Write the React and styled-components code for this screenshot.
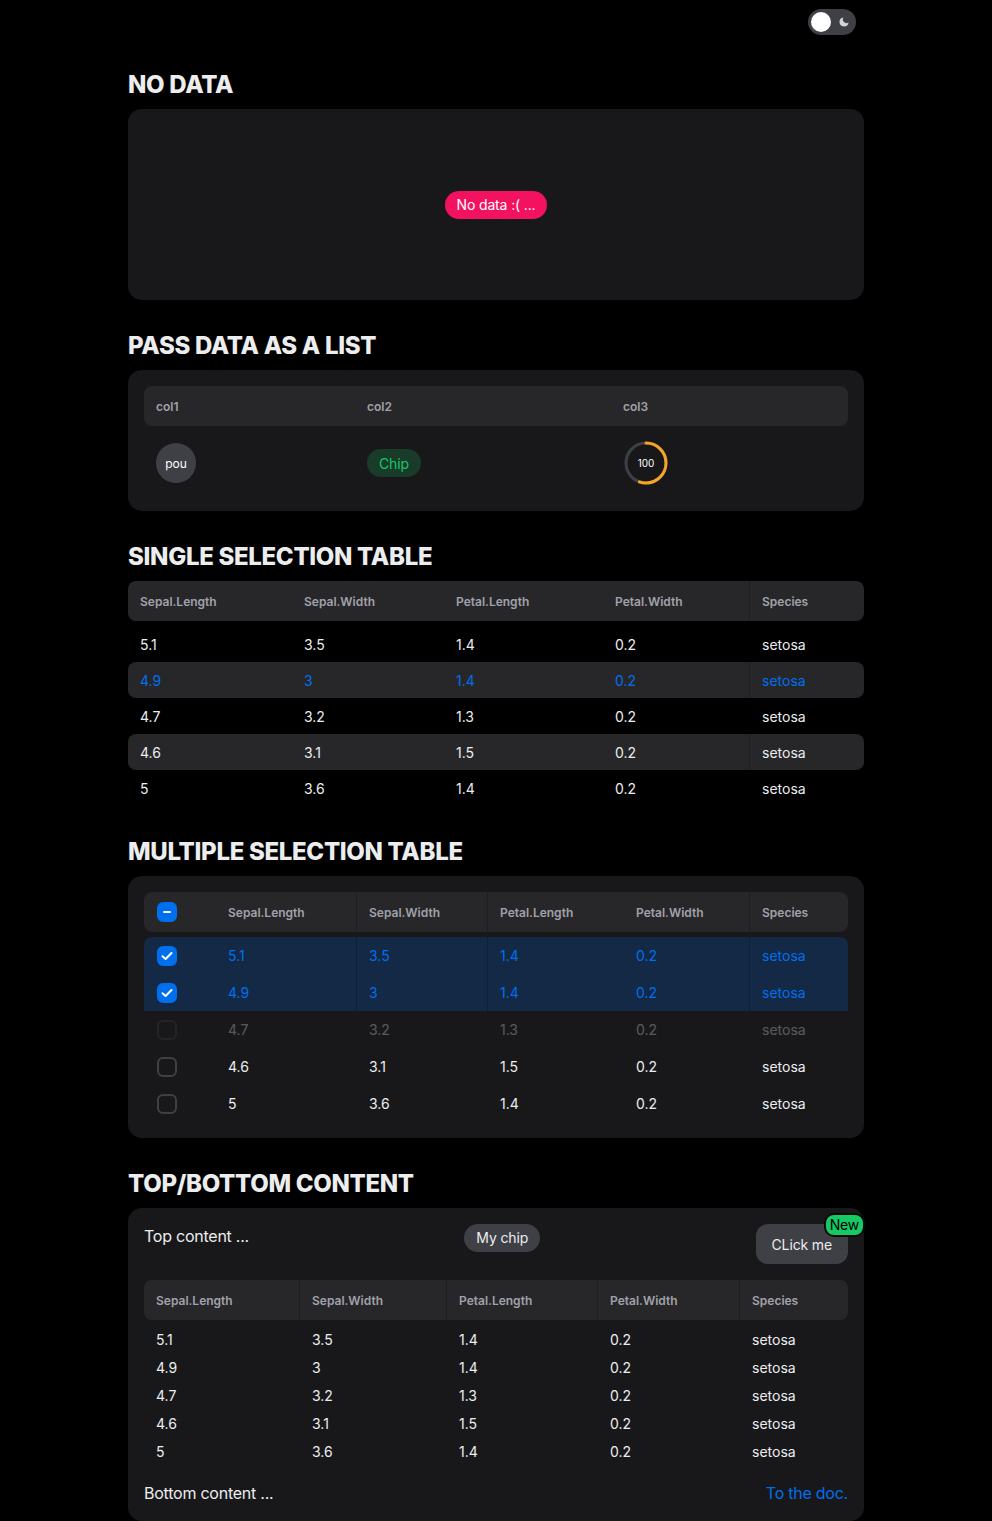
import styled, { createGlobalStyle } from "styled-components";

const GlobalStyle = createGlobalStyle`
  body {
    margin: 0;
    background: #000;
    color: #ecedee;
    font-family: Inter, "Noto Sans", sans-serif;
    -webkit-font-smoothing: antialiased;
  }
`;

const irisCols = ["Sepal.Length", "Sepal.Width", "Petal.Length", "Petal.Width", "Species"];
const irisRows = [
  ["5.1", "3.5", "1.4", "0.2", "setosa"],
  ["4.9", "3", "1.4", "0.2", "setosa"],
  ["4.7", "3.2", "1.3", "0.2", "setosa"],
  ["4.6", "3.1", "1.5", "0.2", "setosa"],
  ["5", "3.6", "1.4", "0.2", "setosa"],
];

const Page = styled.div`
  padding: 9px 0 40px;
`;

const TopBar = styled.div`
  width: 736px;
  margin: 0 auto;
  display: flex;
  justify-content: flex-end;
  padding-right: 8px;
  box-sizing: border-box;
`;

const Toggle = styled.div`
  width: 48px;
  height: 26px;
  border-radius: 13px;
  background: #3f3f46;
  display: flex;
  align-items: center;
  justify-content: space-between;
  padding: 0 6px 0 3px;
  box-sizing: border-box;
  color: #d4d4d8;
`;

const Knob = styled.span`
  width: 20px;
  height: 20px;
  border-radius: 50%;
  background: #fff;
`;

const Main = styled.main`
  width: 736px;
  margin: 34px auto 0;
`;

const Section = styled.section`
  & + & {
    margin-top: 30px;
  }
`;

const Heading = styled.h2`
  margin: 0 0 8px;
  font-size: 24px;
  line-height: 32px;
  font-weight: 800;
  letter-spacing: -0.013em;
  color: #ecedee;
`;

const Card = styled.div`
  background: #18181b;
  border-radius: 14px;
  padding: 16px;
  box-sizing: border-box;
  display: flex;
  flex-direction: column;
  gap: ${(p) => p.$gap || 0}px;
  min-height: ${(p) => p.$minHeight || 0}px;
  justify-content: ${(p) => (p.$center ? "center" : "flex-start")};
  align-items: ${(p) => (p.$center ? "center" : "stretch")};
`;

const Chip = styled.span`
  display: inline-flex;
  align-items: center;
  height: 28px;
  padding: 0 12px;
  border-radius: 14px;
  font-size: 14px;
  letter-spacing: -0.01em;
  background: ${(p) => p.$bg};
  color: ${(p) => p.$fg};
  white-space: nowrap;
`;

const Avatar = styled.span`
  width: 40px;
  height: 40px;
  border-radius: 50%;
  background: #3f3f46;
  color: #fff;
  font-size: 12px;
  display: flex;
  align-items: center;
  justify-content: center;
`;

const HeaderRow = styled.div`
  display: grid;
  grid-template-columns: ${(p) => p.$cols};
  height: 40px;
  background: #27272a;
  border-radius: 8px;
  overflow: hidden;
  font-size: 12px;
  font-weight: 600;
  color: #a1a1aa;
`;

const Body = styled.div`
  margin-top: 5px;
`;

const Row = styled.div`
  display: grid;
  grid-template-columns: ${(p) => p.$cols};
  height: ${(p) => p.$height}px;
  background: ${(p) => p.$bg || "transparent"};
  border-radius: ${(p) => p.$radius || "0"};
  overflow: hidden;
  font-size: 14px;
  color: ${(p) => (p.$selected ? "#006fee" : "#ecedee")};
  opacity: ${(p) => (p.$disabled ? 0.3 : 1)};
`;

const Cell = styled.div`
  display: flex;
  align-items: center;
  padding: 0 12px;
  border-left: 1px solid ${(p) => (p.$divider ? "rgba(0,0,0,0.22)" : "transparent")};
  margin-left: -1px;
  white-space: nowrap;
`;

const Box = styled.span`
  width: 20px;
  height: 20px;
  box-sizing: border-box;
  border-radius: 6px;
  display: flex;
  align-items: center;
  justify-content: center;
  margin-left: 1px;
  background: ${(p) => (p.$on ? "#006fee" : "transparent")};
  border: 2px solid ${(p) => (p.$on ? "#006fee" : "#3f3f46")};
  color: #fff;
`;

const Dash = styled.span`
  width: 8px;
  height: 2px;
  border-radius: 1px;
  background: #fff;
`;

const TopLine = styled.div`
  display: flex;
  justify-content: space-between;
  align-items: flex-start;
  font-size: 16px;
  line-height: 24px;
  letter-spacing: -0.015em;
`;

const BottomLine = styled.div`
  display: flex;
  justify-content: space-between;
  font-size: 16px;
  line-height: 24px;
  letter-spacing: -0.015em;
`;

const DocLink = styled.a`
  color: #006fee;
  text-decoration: none;
`;

const BadgeWrap = styled.span`
  position: relative;
  display: inline-flex;
`;

const Button = styled.button`
  height: 40px;
  padding: 0 16px;
  border: none;
  border-radius: 12px;
  background: #3f3f46;
  color: #ecedee;
  font-family: inherit;
  font-size: 14px;
  letter-spacing: -0.01em;
`;

const Badge = styled.span`
  position: absolute;
  top: -11px;
  right: -17px;
  height: 20px;
  padding: 0 4px;
  border-radius: 10px;
  border: 2px solid #0b0b0c;
  background: #17c964;
  color: #000;
  font-size: 14px;
  line-height: 20px;
`;

const Checkbox = ({ state }) => (
  <Box $on={state !== "off"}>
    {state === "on" && (
      <svg width="12" height="10" viewBox="0 0 12 10" fill="none">
        <polyline points="1.5,5.2 4.6,8 10.5,2" stroke="#fff" strokeWidth="2" strokeLinecap="round" strokeLinejoin="round" />
      </svg>
    )}
    {state === "some" && <Dash />}
  </Box>
);

const Progress = ({ value }) => {
  const c = 2 * Math.PI * 20;
  return (
    <svg width="46" height="46" viewBox="0 0 46 46">
      <circle cx="23" cy="23" r="20" fill="none" stroke="#3f3f46" strokeWidth="3" />
      <circle
        cx="23"
        cy="23"
        r="20"
        fill="none"
        stroke="#f5a524"
        strokeWidth="3"
        strokeLinecap="round"
        strokeDasharray={`${c * 0.55} ${c}`}
        transform="rotate(-90 23 23)"
      />
      <text x="23" y="26.5" textAnchor="middle" fill="#fff" fontSize="10" fontFamily="Inter, sans-serif">
        {value}
      </text>
    </svg>
  );
};

const DataTable = ({ columns, widths, rows, height, dividers = [], rowProps = () => ({}), renderCell }) => {
  const cols = widths.map((w) => `${w}px`).join(" ");
  return (
    <div>
      <HeaderRow $cols={cols}>
        {columns.map((c, i) => (
          <Cell key={i} $divider={dividers.includes(i)}>{c}</Cell>
        ))}
      </HeaderRow>
      <Body>
        {rows.map((r, ri) => {
          const p = rowProps(ri);
          return (
            <Row key={ri} $cols={cols} $height={height} {...p}>
              {r.map((v, ci) => (
                <Cell key={ci} $divider={p.$bg && dividers.includes(ci)}>
                  {renderCell ? renderCell(v, ci, ri) : v}
                </Cell>
              ))}
            </Row>
          );
        })}
      </Body>
    </div>
  );
};

const selectedMulti = [0, 1];

export default function App() {
  return (
    <Page>
      <GlobalStyle />
      <TopBar>
        <Toggle>
          <Knob />
          <svg width="12" height="12" viewBox="0 0 24 24">
            <path d="M21 12.79A9 9 0 1 1 11.21 3 7 7 0 0 0 21 12.79z" fill="currentColor" />
          </svg>
        </Toggle>
      </TopBar>
      <Main>
        <Section>
          <Heading>NO DATA</Heading>
          <Card $minHeight={191} $center>
            <Chip $bg="#f31260" $fg="#fff">No data :( ...</Chip>
          </Card>
        </Section>

        <Section>
          <Heading>PASS DATA AS A LIST</Heading>
          <Card>
            <DataTable
              columns={["col1", "col2", "col3"]}
              widths={[211, 256, 237]}
              rows={[["pou", "Chip", "100"]]}
              height={64}
              renderCell={(v, ci) =>
                ci === 0 ? <Avatar>{v}</Avatar> : ci === 1 ? <Chip $bg="#183b2a" $fg="#17c964">{v}</Chip> : <Progress value={v} />
              }
            />
          </Card>
        </Section>

        <Section>
          <Heading>SINGLE SELECTION TABLE</Heading>
          <DataTable
            columns={irisCols}
            widths={[164, 152, 159, 147, 114]}
            rows={irisRows}
            height={36}
            dividers={[4]}
            rowProps={(i) => ({
              $bg: i === 1 || i === 3 ? "#27272a" : undefined,
              $radius: "8px",
              $selected: i === 1,
            })}
          />
        </Section>

        <Section>
          <Heading>MULTIPLE SELECTION TABLE</Heading>
          <Card>
            <DataTable
              columns={[<Checkbox key="all" state="some" />, ...irisCols]}
              widths={[72, 141, 131, 136, 126, 98]}
              rows={irisRows.map((r) => ["", ...r])}
              height={37}
              dividers={[2, 3, 5]}
              rowProps={(i) => ({
                $bg: selectedMulti.includes(i) ? "#132945" : undefined,
                $radius: i === 0 ? "8px 8px 0 0" : "0",
                $selected: selectedMulti.includes(i),
                $disabled: i === 2,
              })}
              renderCell={(v, ci, ri) =>
                ci === 0 ? <Checkbox state={selectedMulti.includes(ri) ? "on" : "off"} /> : v
              }
            />
          </Card>
        </Section>

        <Section>
          <Heading>TOP/BOTTOM CONTENT</Heading>
          <Card $gap={16}>
            <TopLine>
              <span>Top content ...</span>
              <Chip $bg="#3f3f46" $fg="#ecedee">My chip</Chip>
              <BadgeWrap>
                <Button>CLick me</Button>
                <Badge>New</Badge>
              </BadgeWrap>
            </TopLine>
            <DataTable
              columns={irisCols}
              widths={[156, 147, 151, 142, 108]}
              rows={irisRows}
              height={28}
              dividers={[1, 2, 3, 4]}
            />
            <BottomLine>
              <span>Bottom content ...</span>
              <DocLink href="#">To the doc.</DocLink>
            </BottomLine>
          </Card>
        </Section>
      </Main>
    </Page>
  );
}
